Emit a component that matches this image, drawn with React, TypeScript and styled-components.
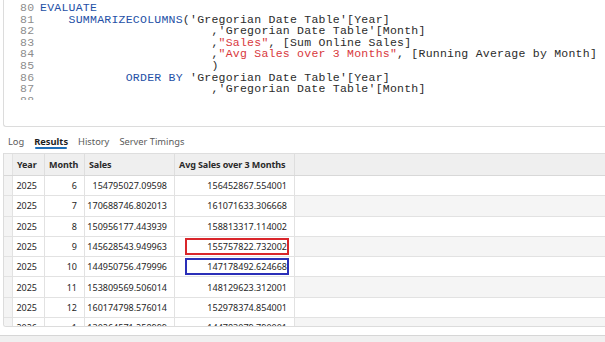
import React from 'react';
import styled, { createGlobalStyle } from 'styled-components';

const GlobalStyle = createGlobalStyle`
    html, body {
        margin: 0;
        padding: 0;
        background: #ffffff;
    }
    body {
        width: 605px;
        height: 342px;
        overflow: hidden;
    }
`;

const Page = styled.div`
    width: 605px;
    height: 342px;
    display: flex;
    flex-direction: column;
    background: #ffffff;
    overflow: hidden;
`;

const Editor = styled.div`
    height: 127px;
    margin-left: 3px;
    border-left: 1px solid #dcdcdc;
    border-bottom: 1px solid #dcdcdc;
    border-bottom-left-radius: 3px;
    box-sizing: border-box;
`;

const CodeArea = styled.div`
    height: 100px;
    padding-top: 2px;
    box-sizing: border-box;
    overflow: hidden;
    font-family: 'Liberation Mono', 'DejaVu Sans Mono', monospace;
    font-size: 11.5px;
    letter-spacing: 0.24px;
    line-height: 11.6px;
    color: #2b2b2b;
`;

const Line = styled.div`
    display: flex;
`;

const LineNo = styled.span`
    width: 36px;
    padding-right: 5.7px;
    box-sizing: border-box;
    text-align: right;
    color: #8d8d8d;
    flex-shrink: 0;
`;

const Code = styled.span`
    display: block;
    white-space: pre;
`;

const Kw = styled.span`
    color: #2450a6;
`;

const Str = styled.span`
    color: #d8383d;
`;

const Tabs = styled.div`
    height: 26px;
    display: flex;
    align-items: flex-end;
    gap: 10px;
    padding-left: 8px;
    font-family: 'Noto Sans', 'Open Sans', sans-serif;
    font-size: 9.3px;
`;

const Tab = styled.div<{ $active?: boolean }>`
    position: relative;
    padding-bottom: 5px;
    color: ${p => (p.$active ? '#1e1e1e' : '#5a5a5a')};
    font-weight: ${p => (p.$active ? 700 : 400)};
    &::after {
        content: '';
        display: ${p => (p.$active ? 'block' : 'none')};
        position: absolute;
        left: 1px;
        right: 1px;
        bottom: 4px;
        height: 2px;
        border-radius: 1px;
        background: #1f6fb8;
    }
`;

const Grid = styled.div`
    height: 174px;
    margin-left: 3px;
    border-left: 1px solid #dcdcdc;
    border-bottom: 1px solid #dcdcdc;
    border-bottom-left-radius: 3px;
    box-sizing: border-box;
    overflow: hidden;
    font-family: 'Noto Sans', 'Open Sans', sans-serif;
    font-size: 9px;
    color: #262626;
`;

const cols = '9px 32px 40px 90px 120px 1fr';

const HeadRow = styled.div`
    display: grid;
    grid-template-columns: ${cols};
    height: 23px;
    background: #efefef;
    border-top: 1px solid #dedede;
    border-bottom: 1px solid #d8d8d8;
    box-sizing: border-box;
    font-weight: 700;
    color: #2a2a2a;
`;

const HeadCell = styled.div`
    display: flex;
    align-items: center;
    padding-left: 4px;
    letter-spacing: -0.1px;
    border-right: 1px solid #dedede;
    white-space: nowrap;
    overflow: hidden;
`;

const Row = styled.div`
    display: grid;
    grid-template-columns: ${cols};
    height: 20.3px;
    border-bottom: 1px solid #e2e2e2;
    box-sizing: border-box;
`;

const Stub = styled.div`
    background: #f4f4f4;
    border-right: 1px solid #e2e2e2;
`;

const Cell = styled.div<{ $marked?: boolean }>`
    display: flex;
    align-items: center;
    justify-content: flex-end;
    padding-right: ${p => (p.$marked ? '5px' : '7px')};
    padding-left: ${p => (p.$marked ? '10px' : '0')};
    background: #ffffff;
    border-right: 1px solid #e2e2e2;
    white-space: nowrap;
    overflow: hidden;
`;

const Mark = styled.div<{ $color: string }>`
    flex: 1;
    height: 17px;
    box-sizing: border-box;
    display: flex;
    align-items: center;
    justify-content: flex-end;
    border: 2px solid ${p => p.$color};
`;

const Filler = styled.div<{ $stripe?: boolean }>`
    background: ${p => (p.$stripe ? '#f5f5f5' : '#ffffff')};
`;

const Footer = styled.div`
    flex: 1;
    margin-top: 8px;
    border-top: 1px solid #d6d6d6;
    background: #f0f0f0;
`;

type DataRow = {
    year: string;
    month: string;
    sales: string;
    avg: string;
    mark?: string;
};

const rows: DataRow[] = [
    { year: '2025', month: '6', sales: '154795027.09598', avg: '156452867.554001' },
    { year: '2025', month: '7', sales: '170688746.802013', avg: '161071633.306668' },
    { year: '2025', month: '8', sales: '150956177.443939', avg: '158813317.114002' },
    { year: '2025', month: '9', sales: '145628543.949963', avg: '155757822.732002', mark: '#d9262b' },
    { year: '2025', month: '10', sales: '144950756.479996', avg: '147178492.624668', mark: '#2a2fb8' },
    { year: '2025', month: '11', sales: '153809569.506014', avg: '148129623.312001' },
    { year: '2025', month: '12', sales: '160174798.576014', avg: '152978374.854001' },
    { year: '2026', month: '1', sales: '130264571.258999', avg: '144783079.790001' },
];

const pad = (n: number) => ' '.repeat(n);

const App = () => {
    return (
        <Page>
            <GlobalStyle />
            <Editor>
                <CodeArea>
                    <Line><LineNo>80</LineNo><Code><Kw>EVALUATE</Kw></Code></Line>
                    <Line><LineNo>81</LineNo><Code>{pad(4)}<Kw>SUMMARIZECOLUMNS</Kw>('Gregorian Date Table'[Year]</Code></Line>
                    <Line><LineNo>82</LineNo><Code>{pad(24)},'Gregorian Date Table'[Month]</Code></Line>
                    <Line><LineNo>83</LineNo><Code>{pad(24)},<Str>"Sales"</Str>, [Sum Online Sales]</Code></Line>
                    <Line><LineNo>84</LineNo><Code>{pad(24)},<Str>"Avg Sales over 3 Months"</Str>, [Running Average by Month]</Code></Line>
                    <Line><LineNo>85</LineNo><Code>{pad(24)})</Code></Line>
                    <Line><LineNo>86</LineNo><Code>{pad(12)}<Kw>ORDER BY</Kw> 'Gregorian Date Table'[Year]</Code></Line>
                    <Line><LineNo>87</LineNo><Code>{pad(24)},'Gregorian Date Table'[Month]</Code></Line>
                    <Line><LineNo>88</LineNo><Code> </Code></Line>
                </CodeArea>
            </Editor>
            <Tabs>
                <Tab>Log</Tab>
                <Tab $active>Results</Tab>
                <Tab>History</Tab>
                <Tab>Server Timings</Tab>
            </Tabs>
            <Grid>
                <HeadRow>
                    <Stub />
                    <HeadCell>Year</HeadCell>
                    <HeadCell>Month</HeadCell>
                    <HeadCell>Sales</HeadCell>
                    <HeadCell>Avg Sales over 3 Months</HeadCell>
                    <div />
                </HeadRow>
                {rows.map((r, i) => (
                    <Row key={i}>
                        <Stub />
                        <Cell>{r.year}</Cell>
                        <Cell>{r.month}</Cell>
                        <Cell>{r.sales}</Cell>
                        {r.mark ? (
                            <Cell $marked>
                                <Mark $color={r.mark}>{r.avg}</Mark>
                            </Cell>
                        ) : (
                            <Cell>{r.avg}</Cell>
                        )}
                        <Filler $stripe={i % 2 === 1} />
                    </Row>
                ))}
            </Grid>
            <Footer />
        </Page>
    );
};

export default App;
